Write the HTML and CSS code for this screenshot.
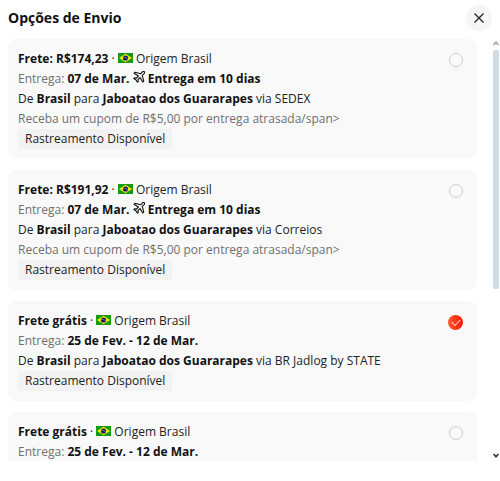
FILE: index.html
```html
<!DOCTYPE html>
<html lang="pt-BR">
<head>
  <meta charset="UTF-8">
  <meta name="viewport" content="width=device-width, initial-scale=1">
  <title>Opções de Envio</title>
  <link rel="stylesheet" href="styles.css">
</head>
<body>
  <!-- shared icons -->
  <svg class="sprite" aria-hidden="true">
    <symbol id="flag-br" viewBox="0 0 15 10">
      <rect width="15" height="10" fill="#149a14"/>
      <path d="M7.5 .8 14 5 7.5 9.2 1 5Z" fill="#f5e60a"/>
      <circle cx="7.5" cy="5" r="2.6" fill="#151c6e"/>
      <path d="M5 4.3q2.8-.3 4.9 1.7" fill="none" stroke="#8fb0c8" stroke-width=".6"/>
    </symbol>
    <symbol id="plane" viewBox="0 0 12 12">
      <path d="M11.3.7c-.7-.5-1.5-.2-2.1.4L7.600 2.8 2 1.3 1 2.3l4.400 2.700L3.500 7 1.700 6.700.8 7.600l2.300 1.300 1.300 2.300.9-.9L5 8.500l2-1.900 2.700 4.400 1-1L9.200 4.400l1.700-1.600c.6-.6.9-1.500.4-2.100Z" fill="none" stroke="#111" stroke-width="1.1" stroke-linejoin="round"/>
    </symbol>
  </svg>

  <div class="modal">
    <header class="modal-header">
      <h1>Opções de Envio</h1>
      <button class="close" type="button" aria-label="Fechar">
        <svg width="10" height="10" viewBox="0 0 10 10"><path d="M.5 .5l9 9M9.5 .5l-9 9" stroke="#222" stroke-width="1.3" fill="none"/></svg>
      </button>
    </header>

    <div class="modal-body">
      <div class="options">
        <label class="option">
          <span class="info">
            <span class="line"><b>Frete: R$174,23</b> · <svg class="flag"><use href="#flag-br"/></svg> Origem Brasil</span>
            <span class="line"><span class="muted">Entrega:</span> <b>07 de Mar.</b> <svg class="plane"><use href="#plane"/></svg> <b>Entrega em 10 dias</b></span>
            <span class="line">De <b>Brasil</b> para <b>Jaboatao dos Guararapes</b> via SEDEX</span>
            <span class="line muted">Receba um cupom de R$5,00 por entrega atrasada/span&gt;</span>
            <span class="tag">Rastreamento Disponível</span>
          </span>
          <input type="radio" name="envio">
        </label>

        <label class="option">
          <span class="info">
            <span class="line"><b>Frete: R$191,92</b> · <svg class="flag"><use href="#flag-br"/></svg> Origem Brasil</span>
            <span class="line"><span class="muted">Entrega:</span> <b>07 de Mar.</b> <svg class="plane"><use href="#plane"/></svg> <b>Entrega em 10 dias</b></span>
            <span class="line">De <b>Brasil</b> para <b>Jaboatao dos Guararapes</b> via Correios</span>
            <span class="line muted">Receba um cupom de R$5,00 por entrega atrasada/span&gt;</span>
            <span class="tag">Rastreamento Disponível</span>
          </span>
          <input type="radio" name="envio">
        </label>

        <label class="option">
          <span class="info">
            <span class="line"><b>Frete grátis</b> · <svg class="flag"><use href="#flag-br"/></svg> Origem Brasil</span>
            <span class="line"><span class="muted">Entrega:</span> <b>25 de Fev. - 12 de Mar.</b></span>
            <span class="line">De <b>Brasil</b> para <b>Jaboatao dos Guararapes</b> via BR Jadlog by STATE</span>
            <span class="tag">Rastreamento Disponível</span>
          </span>
          <input type="radio" name="envio" checked>
        </label>

        <label class="option">
          <span class="info">
            <span class="line"><b>Frete grátis</b> · <svg class="flag"><use href="#flag-br"/></svg> Origem Brasil</span>
            <span class="line"><span class="muted">Entrega:</span> <b>25 de Fev. - 12 de Mar.</b></span>
          </span>
          <input type="radio" name="envio">
        </label>
      </div>

      <div class="scrollbar" aria-hidden="true">
        <svg class="arrow" viewBox="0 0 6 5"><path d="M.5 4 3 1.3 5.5 4" fill="none" stroke="#a8a8a8" stroke-width="1.8"/></svg>
        <div class="track"><div class="thumb"></div></div>
        <svg class="arrow" viewBox="0 0 6 5"><path d="M.5 1 3 3.7 5.5 1" fill="none" stroke="#444" stroke-width="1.8"/></svg>
      </div>
    </div>
  </div>
</body>
</html>
```
FILE: styles.css
```css
* {
  box-sizing: border-box;
}
body {
  margin: 0;
  background: #ffffff;
  color: #222222;
  font-family: "Segoe UI", "Open Sans", "Noto Sans", sans-serif;
  font-size: 12px;
  line-height: 20px;
}
.sprite {
  display: none;
}
.modal {
  display: flex;
  flex-direction: column;
  height: 100vh;
  padding-bottom: 20px;
}
.modal-header {
  display: flex;
  justify-content: space-between;
  align-items: center;
  padding: 5px 8px 7px;
}
.modal-header h1 {
  margin: 0;
  font-size: 14px;
  color: #111111;
}
.close {
  display: flex;
  align-items: center;
  justify-content: center;
  width: 26px;
  height: 26px;
  padding: 0;
  border: 0;
  border-radius: 50%;
  background: #f5f5f5;
}
.modal-body {
  display: flex;
  flex: 1;
  min-height: 0;
}
.options {
  flex: 1;
  overflow: hidden;
  padding: 1px 16px 0 8px;
}
.option {
  display: flex;
  justify-content: space-between;
  margin-bottom: 11px;
  padding: 10px 14px 10px 10px;
  border-radius: 8px;
  background: #f9f9f9;
}
.line {
  display: block;
  white-space: nowrap;
}
b {
  color: #111111;
}
.muted {
  color: #707070;
}
.tag {
  display: inline-block;
  padding: 0 7px;
  background: #f2f2f2;
  vertical-align: top;
}
.flag {
  width: 15px;
  height: 10px;
}
.plane {
  width: 12px;
  height: 12px;
}

/* radio */
.option input {
  appearance: none;
  flex: none;
  width: 14px;
  height: 14px;
  margin: 4px 0 0;
  border: 1px solid #cccccc;
  border-radius: 50%;
}
.option input:checked {
  display: flex;
  align-items: center;
  justify-content: center;
  width: 15px;
  height: 15px;
  border: 0;
  background: linear-gradient(90deg, #ff5a2c, #ff1505);
}
.option input:checked::before {
  content: "";
  width: 7px;
  height: 4px;
  margin-bottom: 2px;
  border: solid #ffd8d0;
  border-width: 0 0 1px 1px;
  transform: rotate(-45deg);
}

/* scrollbar */
.scrollbar {
  display: flex;
  flex-direction: column;
  width: 7px;
  padding: 3px 1px 3px 0;
}
.arrow {
  width: 6px;
  height: 5px;
}
.track {
  flex: 1;
  padding: 4px 0;
}
.thumb {
  height: 60%;
  border-radius: 2px;
  background: #cfdbe6;
}
```
